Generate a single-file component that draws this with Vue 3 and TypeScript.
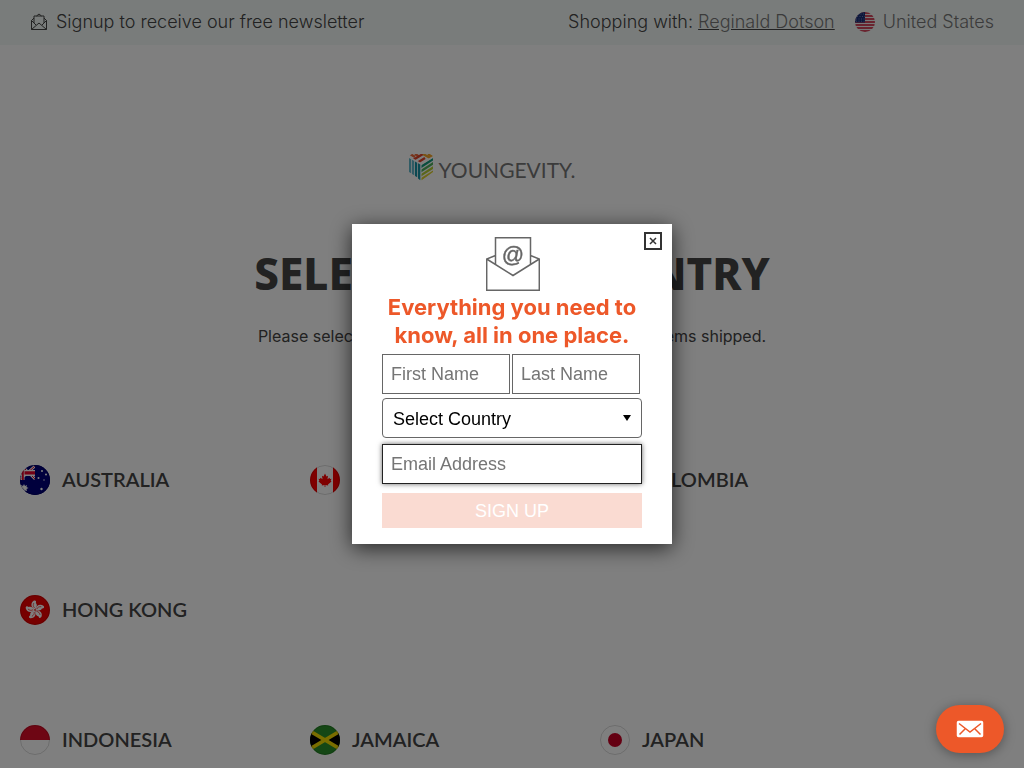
<script setup lang="ts">
import { onMounted, ref } from 'vue'

interface Country {
  code: string
  name: string
}

const rows: Country[][] = [
  [
    { code: 'au', name: 'AUSTRALIA' },
    { code: 'ca', name: 'CANADA' },
    { code: 'co', name: 'COLOMBIA' },
  ],
  [{ code: 'hk', name: 'HONG KONG' }],
  [
    { code: 'id', name: 'INDONESIA' },
    { code: 'jm', name: 'JAMAICA' },
    { code: 'jp', name: 'JAPAN' },
  ],
]

const firstName = ref('')
const lastName = ref('')
const country = ref('')
const email = ref('')
const open = ref(true)
const emailBox = ref<HTMLInputElement | null>(null)
const petals = [0, 72, 144, 216, 288]

onMounted(() => emailBox.value?.focus())
</script>

<template>
  <div class="page">
    <header class="topbar">
      <a class="signup" href="#newsletter">
        <svg class="mail" viewBox="0 0 18 18" aria-hidden="true">
          <path d="M4 5 1.500 7.500v9h15v-9L14 5M4 10V3h10v7M6.500 3 9 1l2.500 2M1.500 7.500 6 12M16.500 7.500 12 12M1.500 16.500 9 10l7.500 6.500" />
        </svg>
        <span>Signup to receive our free newsletter</span>
      </a>
      <div class="account">
        <span>Shopping with: <a href="#associate">Reginald Dotson</a></span>
        <button class="region" type="button">
          <svg viewBox="0 0 20 20" aria-hidden="true">
            <clipPath id="us"><circle cx="10" cy="10" r="10" /></clipPath>
            <g clip-path="url(#us)">
              <path fill="#f0f0f0" d="M0 0h20v20H0z" />
              <path stroke="#c8102e" stroke-width="1.700" d="M0 1h20M0 4h20M0 7h20M0 10h20M0 13h20M0 16h20M0 19h20" />
              <path fill="#1a2f78" d="M0 0h10v10.500H0z" />
              <path stroke="#8f9cc8" stroke-width="0.700" stroke-dasharray="1 1.500" d="M3 2h7M2 4.500h8M1 7h9M1 9.200h9" />
            </g>
          </svg>
          <span>United States</span>
        </button>
      </div>
    </header>

    <main>
      <a class="logo" href="#home">
        <svg viewBox="0 0 24 27" aria-hidden="true">
          <clipPath id="top"><path d="M3 0h18l3 2-12 7L0 2z" /></clipPath>
          <clipPath id="right"><path d="M12.500 10.500 24 4v14l-11.500 8.500z" /></clipPath>
          <path fill="#63b9cb" d="M0 4l2.200 1.300v14L0 18zM3 5.800l2.200 1.300v14.200L3 20z" />
          <path fill="#1793a5" d="M6 7.500l2.200 1.300v14.500L6 22zM9 9.300l2.300 1.300v15.600L9 24.500z" />
          <g fill="none" stroke-width="2.400" clip-path="url(#top)">
            <path stroke="#ef6a3a" d="M1 0 6 3M6 0l4 2.500" />
            <path stroke="#e2442b" d="M4 6 14 0M8 9l8-5" />
            <path stroke="#f5a52b" d="M14 0l8 4.500M19 0l5 3" />
          </g>
          <g fill="none" stroke-width="2.300" clip-path="url(#right)">
            <path stroke="#159a7c" d="M11 13.500 25 4.500" />
            <path stroke="#4fb05d" d="M11 17.700 25 8.700" />
            <path stroke="#b4cc34" d="M11 21.900l14-9" />
            <path stroke="#dccf2d" d="M11 26.100l14-9" />
          </g>
        </svg>
        <span>YOUNGEVITY.</span>
      </a>
      <h1>SELECT YOUR COUNTRY</h1>
      <p class="lead">Please select the country where you would like your items shipped.</p>

      <nav class="countries" aria-label="Countries">
        <div v-for="(row, i) in rows" :key="i" class="row">
          <a v-for="c in row" :key="c.code" class="country" :href="'#' + c.code">
            <svg viewBox="0 0 30 30" aria-hidden="true">
              <clipPath :id="'clip-' + c.code"><circle cx="15" cy="15" r="15" /></clipPath>
              <g :clip-path="'url(#clip-' + c.code + ')'">
                <template v-if="c.code === 'au'">
                  <path fill="#00007a" d="M0 0h30v30H0z" />
                  <path stroke="#fff" stroke-width="2.600" d="M-1-2 15 14M0 14.500 14.500 1.500" />
                  <path stroke="#e4002b" stroke-width="1" d="M-1-2 15 14M0 14.500 14.500 1.500" />
                  <path fill="#fff" d="M0 5h15v6H0z" />
                  <path fill="#e4002b" d="M0 6.300h15v3.200H0z" />
                  <path fill="#fff" d="M1.500 2h3v13h-3z" />
                  <path fill="#e4002b" d="M2 2h1.800v13H2z" />
                  <path fill="#00007a" d="M0 15h15V0h15v30H0z" />
                  <path fill="#fff" d="M4 19l1 2 2-1-.5 2 2 1-2 1 .5 2-2-.5-1 2-1-2-2 .5v-6l2 1z" />
                  <g fill="#fff">
                    <circle cx="22" cy="6" r="1" /><circle cx="18.500" cy="13" r="1" />
                    <circle cx="26" cy="9.500" r="1" /><circle cx="24" cy="15" r="0.700" />
                    <circle cx="21.500" cy="24" r="1.200" />
                  </g>
                </template>
                <template v-else-if="c.code === 'ca'">
                  <path fill="#fff" d="M0 0h30v30H0z" />
                  <path fill="red" d="M0 0h7v30H0zM23 0h7v30h-7z" />
                  <path fill="red" d="M15 8.500l1.500 3 1.500-.7-.5 3.500 2-1.500.5 1.200 1.500-.2-.8 2 .8.600-3.500 3 .2 1-2.800-.4V22h-.8v-2l-2.800.4.2-1-3.500-3 .8-.6-.8-2 1.500.2.500-1.200 2 1.500-.5-3.500 1.500.7z" />
                </template>
                <template v-else-if="c.code === 'co'">
                  <path fill="#fcd116" d="M0 0h30v15H0z" />
                  <path fill="#003893" d="M0 15h30v8H0z" />
                  <path fill="#ce1126" d="M0 23h30v7H0z" />
                </template>
                <template v-else-if="c.code === 'hk'">
                  <path fill="#ee0000" d="M0 0h30v30H0z" />
                  <g v-for="p in petals" :key="p" :transform="'rotate(' + p + ' 15 15)'">
                    <path fill="#fff" d="M14.700 14.500C11 12.500 10 8 14 5.500c2-.5 2.500 1 1.800 2.500 2 2 .9 4.500-1.100 6.500z" />
                    <path fill="none" stroke="#ee0000" stroke-width="0.600" d="M14.600 13c-1.600-1.500-1.600-3-.8-5" />
                  </g>
                </template>
                <template v-else-if="c.code === 'id'">
                  <path fill="#fff" d="M0 0h30v30H0z" />
                  <path fill="#dc0d28" d="M0 0h30v15H0z" />
                </template>
                <template v-else-if="c.code === 'jm'">
                  <path fill="#2a8f2a" d="M0 0h30v30H0z" />
                  <path d="M0 6v18l12-9zM30 6v18l-12-9z" />
                  <path stroke="#f4dc00" stroke-width="3.500" d="M-1 5.500l32 19M-1 24.500l32-19" />
                </template>
                <template v-else>
                  <path fill="#fff" d="M0 0h30v30H0z" />
                  <circle cx="15" cy="15" r="7" fill="#c80025" />
                </template>
              </g>
              <circle cx="15" cy="15" r="14.500" fill="none" stroke="#000" stroke-opacity="0.150" />
            </svg>
            <span>{{ c.name }}</span>
          </a>
        </div>
      </nav>
    </main>

    <div v-if="open" class="overlay">
      <form class="modal" role="dialog" aria-labelledby="modal-title" @submit.prevent>
        <button class="close" type="button" aria-label="Close" @click="open = false">
          <svg viewBox="0 0 8 8" aria-hidden="true"><path d="M1 1l6 6M7 1 1 7" /></svg>
        </button>
        <svg class="letter" viewBox="0 0 54 54" aria-hidden="true">
          <path d="M9.500 18.500 .700 22v31.300h52.600V22l-8.800-3.500M9.500 27V.700h35V27M.700 22 27 38.500 53.300 22" />
          <text x="27" y="25" text-anchor="middle">@</text>
        </svg>
        <h2 id="modal-title">Everything you need to know, all in one place.</h2>
        <div class="names">
          <input v-model="firstName" type="text" placeholder="First Name" aria-label="First Name" />
          <input v-model="lastName" type="text" placeholder="Last Name" aria-label="Last Name" />
        </div>
        <div class="select">
          <select v-model="country" aria-label="Country">
            <option value="">Select Country</option>
            <option v-for="c in rows.flat()" :key="c.code" :value="c.code">{{ c.name }}</option>
          </select>
          <svg viewBox="0 0 8 6" aria-hidden="true"><path d="M0 0h8L4 6z" /></svg>
        </div>
        <input ref="emailBox" v-model="email" class="email" type="email" placeholder="Email Address" aria-label="Email Address" />
        <button class="submit" type="submit">SIGN UP</button>
      </form>
    </div>

    <button class="chat" type="button" aria-label="Contact us">
      <svg viewBox="0 0 28 18" aria-hidden="true">
        <rect width="28" height="18" rx="2.500" fill="#fff" />
        <path d="M3 3.500 14 12 25 3.500M3.500 14.500l6-6M24.500 14.500l-6-6" />
      </svg>
    </button>
  </div>
</template>

<style>
body {
  margin: 0;
  background: #fff;
}
</style>

<style scoped>
* {
  box-sizing: border-box;
}
.page {
  min-height: 100vh;
  color: #444;
  font-family: "Noto Sans", sans-serif;
}
a {
  color: inherit;
}
button {
  border: 0;
  padding: 0;
  font: inherit;
  cursor: pointer;
}
.topbar {
  display: flex;
  justify-content: space-between;
  align-items: center;
  height: 45px;
  padding: 0 30px 1px;
  background: #f2f9f6;
  font: 300 18px/24px Inter, sans-serif;
}
.signup {
  display: flex;
  align-items: center;
  gap: 8px;
  text-decoration: none;
}
.mail {
  width: 18px;
  height: 18px;
  fill: none;
  stroke: #444;
}
.account {
  display: flex;
  align-items: center;
  gap: 20px;
}
.account a {
  color: #777;
  text-decoration-color: #444;
}
.region {
  display: flex;
  align-items: center;
  gap: 8px;
  background: none;
  color: #777;
}
.region svg {
  width: 20px;
  height: 20px;
}
main {
  padding: 108px 0 13px;
  text-align: center;
}
.logo {
  display: flex;
  justify-content: center;
  align-items: center;
  gap: 6px;
  height: 28px;
  padding-right: 40px;
  color: #777;
  font: 400 21px/28px Lato, sans-serif;
  text-decoration: none;
}
.logo svg {
  width: 24px;
  height: 27px;
}
.logo span {
  padding-top: 5px;
}
h1 {
  margin: 62px 0 0;
  font: 800 44px/60px "Noto Sans", sans-serif;
}
.lead {
  margin: 21px 0 0;
  font: 16px/24px Inter, sans-serif;
}
.countries {
  display: grid;
  gap: 100px;
  margin-top: 117px;
  padding: 0 134px 0 20px;
}
.row {
  display: grid;
  grid-template-columns: repeat(3, 1fr);
}
.country {
  display: flex;
  align-items: center;
  gap: 12px;
  height: 30px;
  font: 600 20px/28px Lato, sans-serif;
  text-decoration: none;
}
.country span {
  padding-bottom: 2px;
}
.country svg {
  width: 30px;
  height: 30px;
}
.overlay {
  position: fixed;
  inset: 0;
  display: flex;
  align-items: center;
  justify-content: center;
  background: rgba(0, 0, 0, 0.5);
}
.modal {
  position: relative;
  display: flex;
  flex-direction: column;
  width: 320px;
  padding: 13px 30px 16px;
  background: #fff;
  box-shadow: 0 4px 20px rgba(0, 0, 0, 0.7);
  font-family: "Liberation Sans", sans-serif;
}
.close {
  position: absolute;
  top: 8px;
  right: 10px;
  display: grid;
  place-items: center;
  width: 18px;
  height: 18px;
  border: 2px solid #333;
  background: #fff;
}
.close svg {
  width: 8px;
  height: 8px;
  stroke: #333;
  stroke-width: 1.5;
}
.letter {
  align-self: center;
  width: 54px;
  height: 54px;
  margin-left: 2px;
  fill: none;
  stroke: #666;
  stroke-width: 1.5;
}
.letter text {
  fill: #666;
  stroke: #666;
  stroke-width: 0.4;
  font-size: 22px;
}
h2 {
  margin: 2px 0 5px;
  color: #ed5829;
  font: 700 22px/28px Inter, sans-serif;
  text-align: center;
}
.names {
  display: grid;
  grid-template-columns: 1fr 1fr;
  gap: 2px;
  padding-right: 2px;
}
.modal input,
.modal select {
  width: 100%;
  min-width: 0;
  height: 40px;
  margin: 0;
  border: 1px solid #666;
  padding: 0 8px;
  background: #fff;
  color: #000;
  font: 18px "Liberation Sans", sans-serif;
  outline: 0;
}
.modal input::placeholder {
  color: #757575;
}
.select {
  position: relative;
  margin: 4px 0 6px;
}
.modal select {
  display: block;
  appearance: none;
  border-radius: 4px;
  padding: 1px 10px 0;
}
.select svg {
  position: absolute;
  top: 17px;
  right: 11px;
  width: 8px;
  height: 6px;
  pointer-events: none;
}
.modal .email:focus {
  border-color: #222;
  box-shadow: 0 0 5px rgba(0, 0, 0, 0.6);
}
.submit {
  height: 35px;
  margin-top: 9px;
  padding-top: 1px;
  background: #fadbd2;
  color: #fff;
  font-size: 18px;
}
.chat {
  position: fixed;
  right: 20px;
  bottom: 15px;
  display: grid;
  place-items: center;
  width: 68px;
  height: 48px;
  border-radius: 24px;
  background: #ed5829;
  box-shadow: 0 2px 12px rgba(0, 0, 0, 0.35);
}
.chat svg {
  width: 28px;
  height: 18px;
  fill: none;
  stroke: #ed5829;
  stroke-width: 1.5;
}
</style>
